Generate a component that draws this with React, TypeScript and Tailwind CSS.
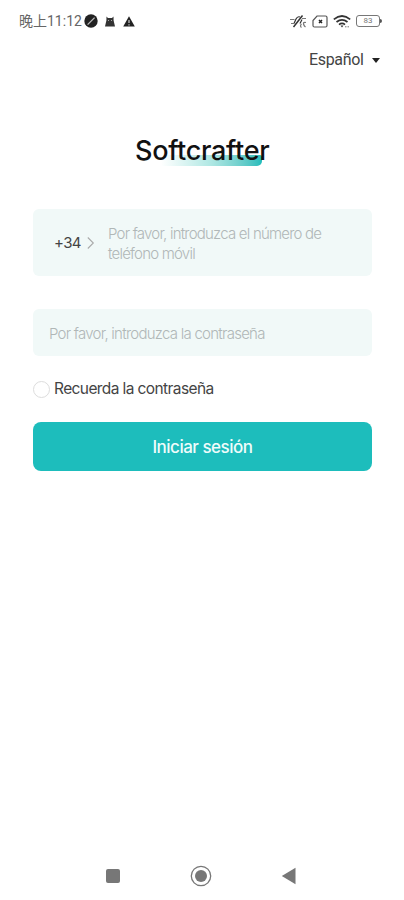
import React, { useState } from 'react';

const StatusBar: React.FC = () => (
  <div className="flex h-[42px] items-center justify-between pl-[19px] pr-[22px]">
    <div className="flex items-center">
      <span className="w-[65px] whitespace-nowrap font-['Roboto','Noto_Sans_CJK_SC',sans-serif] text-[14px] leading-none text-[#666]">
        晚上11:12
      </span>
      <svg width="14" height="14" viewBox="0 0 14 14">
        <circle cx="7" cy="7" r="6.7" fill="#222" />
        <path d="M3.6 10.6 10.6 3.6" stroke="#bbb" strokeWidth="1.3" />
      </svg>
      <svg className="ml-[7px]" width="10" height="11" viewBox="0 0 10 11">
        <path d="M1.5 0.5 3 2h4L8.5.5 8.6 4.5 10 10.5H0L1.4 4.5Z" fill="#333" />
        <path d="M3 4.5h1M6 4.5h1" stroke="#aaa" />
      </svg>
      <svg className="ml-[8px]" width="12" height="11" viewBox="0 0 12 11">
        <path d="M6 .3 11.8 10.6H.2Z" fill="#222" />
        <path d="M6 4v3M6 8.2v1.2" stroke="#ddd" strokeWidth="1.1" />
      </svg>
    </div>
    <div className="flex items-center">
      {/* Vibrate / muted bell */}
      <svg width="17" height="15" viewBox="0 0 17 15" fill="none" stroke="#333" strokeWidth="1.2">
        <path d="M3.5 13 12.5 1.5" strokeWidth="1.5" />
        <path d="M4 9.5 6 5Q7.5 2 10 3M12 5.5 10 9.5" />
        <path d="M0 5.5H4.500M1 9.500h3M12 4.500h4M16 8.500q-3-.5-2.500 1.500T15.500 13M11.500 10q-2 2 0 3.500" stroke="#777" />
      </svg>
      <svg className="ml-[5px]" width="16" height="13" viewBox="0 0 16 13" fill="none">
        <path d="M5 1h8.5q1.5 0 1.5 1.5v8q0 1.5-1.5 1.5h-11Q1 12 1 10.5V5.5Z" stroke="#555" strokeWidth="1.2" />
        <path d="m7 5 3 3M10 5 7 8" stroke="#222" strokeWidth="1.5" />
      </svg>
      <svg className="ml-[5px]" width="18" height="13" viewBox="0 0 18 13" fill="none" stroke="#333" strokeWidth="1.7">
        <path d="M.8 4.3q8.2-6.6 16.4 0M3.5 7q5.5-4.3 11 0M6 9.6q3-2.3 6 0" />
        <path d="m7.5 10.5 1.5 2 1.5-2Z" fill="#333" stroke="none" />
        <path d="M12 11.8h1.5M14.5 11.8H16" stroke="#777" strokeWidth="1" />
      </svg>
      <div className="ml-[5px] flex items-center">
        <span className="flex h-[12px] w-[24px] items-center justify-center rounded-[3px] border border-[#777] font-['Roboto',sans-serif] text-[8px] leading-none text-[#777]">
          83
        </span>
        <span className="h-[4px] w-[2px] rounded-r-full bg-[#555]" />
      </div>
    </div>
  </div>
);

const NavBar: React.FC = () => (
  <nav className="flex h-[48px] items-center pl-[106px]">
    <button aria-label="Recientes" className="size-[14px] rounded-[2px] bg-[#777]" />
    <button aria-label="Inicio" className="ml-[70px]">
      <svg width="22" height="22" viewBox="0 0 22 22">
        <circle cx="11" cy="11" r="9.7" fill="none" stroke="#777" strokeWidth="1.3" />
        <circle cx="11" cy="11" r="6" fill="#777" />
      </svg>
    </button>
    <button aria-label="Atrás" className="ml-[69px]">
      <svg width="15" height="18" viewBox="0 0 15 18">
        <path d="M14.5 .8v16.4L.8 9Z" fill="#777" />
      </svg>
    </button>
  </nav>
);

export default function App() {
  const [remember, setRemember] = useState(false);

  return (
    <div className="flex h-[900px] w-[404px] flex-col overflow-hidden bg-white font-['Inter',sans-serif]">
      <StatusBar />

      <button className="mr-[24px] flex h-[36px] items-center self-end">
        <span className="w-[63px] whitespace-nowrap text-left font-['Roboto',sans-serif] text-[16px] leading-none tracking-[-0.35px] text-[#444]">
          Español
        </span>
        <svg width="8" height="5" viewBox="0 0 8 5">
          <path d="M0 0h8L4 5Z" fill="#222" />
        </svg>
      </button>

      <main className="flex flex-1 flex-col px-[33px] pt-[55px]">
        <h1 className="relative ml-[102px] h-[36px] w-[136px] whitespace-nowrap text-[27px] font-medium leading-[36px] tracking-[-0.3px] text-[#111]">
          <span className="absolute left-[26px] top-[22px] h-[11px] w-[101px] rounded-br-[5px] rounded-tr-[2px] bg-linear-to-r from-white via-[#aee7e3] to-[#1fbcbb]" />
          <span className="relative">Softcrafter</span>
        </h1>

        <div className="mt-[40px] flex h-[67px] w-[339px] items-center rounded-[6px] bg-[#f1f9f8] pl-[21px]">
          <button className="flex items-center">
            <span className="w-[33px] text-left text-[15px] leading-none tracking-[-0.6px] text-[#444]">+34</span>
            <svg width="8" height="14" viewBox="0 0 8 14" fill="none" stroke="#aaa" strokeWidth="1.1">
              <path d="m.8 1.5 5.5 5.5L.8 12.5" />
            </svg>
          </button>
          <span className="ml-[13px] whitespace-nowrap pt-[2px] text-[15px] font-light leading-[20px] tracking-[-0.79px] text-[#b0b7b7]">
            Por favor, introduzca el número de
            <br />
            teléfono móvil
          </span>
        </div>

        <div className="mt-[33px] flex h-[47px] w-[339px] items-center whitespace-nowrap rounded-[6px] bg-[#f1f9f8] pl-[16px] pt-[3px] text-[15px] font-light tracking-[-0.75px] text-[#b0b7b7]">
          Por favor, introduzca la contraseña
        </div>

        <button className="mt-[23px] flex h-[20px] items-center" onClick={() => setRemember(!remember)}>
          <span className={`size-[17px] rounded-full border border-[#ddd] ${remember ? 'bg-[#1dbdbc]' : 'bg-white'}`} />
          <span className="ml-[4px] whitespace-nowrap text-[15.5px] leading-none tracking-[-0.6px] text-[#444]">
            Recuerda la contraseña
          </span>
        </button>

        <button className="mt-[23px] flex h-[49px] w-[339px] items-center justify-center rounded-[8px] bg-[#1dbdbc] pt-[2px] text-[17px] font-medium tracking-[-0.5px] text-[#effcfb]">
          Iniciar sesión
        </button>
      </main>

      <NavBar />
    </div>
  );
}
